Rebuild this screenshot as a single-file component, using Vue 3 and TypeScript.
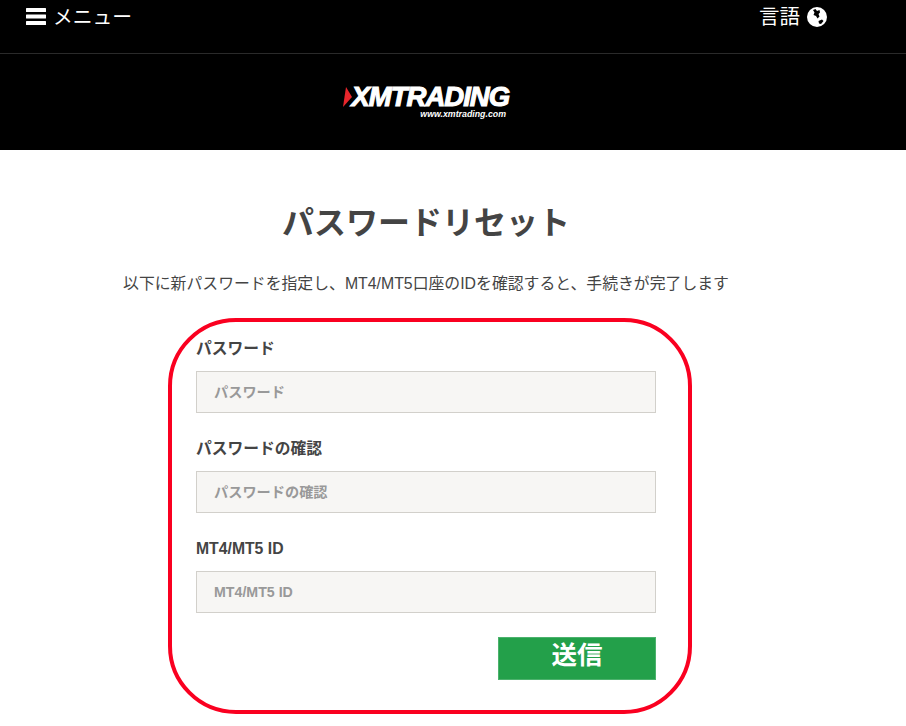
<script setup lang="ts">
const fields = [
  { label: 'パスワード', placeholder: 'パスワード' },
  { label: 'パスワードの確認', placeholder: 'パスワードの確認' },
  { label: 'MT4/MT5 ID', placeholder: 'MT4/MT5 ID' },
]
</script>

<template>
  <div class="page">
    <div class="topbar">
      <div class="menu">
        <svg class="burger" width="20" height="17" viewBox="0 0 20 17" fill="#fff">
          <rect y="0" width="20" height="4" rx="0.5" />
          <rect y="6.5" width="20" height="4" rx="0.5" />
          <rect y="13" width="20" height="4" rx="0.5" />
        </svg>
        <span>メニュー</span>
      </div>
      <div class="lang">
        <span>言語</span>
        <svg width="20" height="20" viewBox="0 0 20 20">
          <circle cx="10" cy="10" r="10" fill="#fff" />
          <path d="M6 3 8.500 2 10 4 12.500 3 13 5.500 11.500 7 12.500 9.500 10.500 11.500 9 9 6.500 8 7.500 5.500z" fill="#000" />
          <path d="M11.500 14 15 12.500 16.500 14 14 17 12 16.500z" fill="#000" />
        </svg>
      </div>
    </div>

    <div class="brand">
      <div class="logo">
        <svg class="mark" width="9" height="20" viewBox="0 0 9 20">
          <path d="M3 0 9 10 0 20z" fill="#e8262c" />
        </svg>
        <div class="logo-text">
          <div class="logo-name">XMTRADING</div>
          <div class="logo-url">www.xmtrading.com</div>
        </div>
      </div>
    </div>

    <main class="content">
      <h1>パスワードリセット</h1>
      <p class="lead">以下に新パスワードを指定し、MT4/MT5口座のIDを確認すると、手続きが完了します</p>

      <form class="form" @submit.prevent>
        <div v-for="f in fields" :key="f.label" class="field">
          <label>{{ f.label }}</label>
          <input type="text" :placeholder="f.placeholder" />
        </div>
        <div class="actions">
          <button type="submit">送信</button>
        </div>
      </form>
    </main>
  </div>
</template>

<style>
html, body {
  margin: 0;
  background: #fff;
}
</style>

<style scoped>
.page {
  width: 906px;
  height: 726px;
  overflow: hidden;
  font-family: "Liberation Sans", "Noto Sans CJK JP", sans-serif;
  color: #444;
}

.topbar {
  height: 53px;
  background: #000;
  border-bottom: 1px solid #2a2a2a;
  display: flex;
  justify-content: space-between;
  align-items: flex-start;
  padding: 0 79px 0 26px;
  color: #fff;
  font-size: 20.5px;
}

.menu {
  display: flex;
  align-items: center;
  gap: 7px;
  height: 32px;
  font-size: 19.8px;
}

.menu span {
  margin-top: -2px;
}

.lang {
  display: flex;
  align-items: center;
  gap: 7px;
  height: 33px;
}

.lang span {
  margin-top: -3px;
}

.brand {
  height: 96px;
  background: #000;
  padding-right: 54px;
  display: flex;
  justify-content: center;
  align-items: flex-start;
}

.logo {
  display: flex;
  align-items: flex-start;
  margin-top: 33px;
  width: 167px;
}

.mark {
  flex: none;
}

.logo-text {
  color: #fff;
  font-style: italic;
  font-weight: 700;
}

.logo-name {
  font-size: 27.5px;
  line-height: 20px;
  letter-spacing: -1px;
  -webkit-text-stroke: 1.1px #fff;
  white-space: nowrap;
}

.logo-url {
  font-size: 8.8px;
  line-height: 10px;
  text-align: right;
  padding-right: 3px;
  margin-top: 2px;
  white-space: nowrap;
}

.content {
  width: 852px;
  display: flex;
  flex-direction: column;
  align-items: center;
}

h1 {
  margin: 51px 0 0;
  font-size: 32px;
  line-height: 44px;
  font-weight: 700;
  color: #444;
}

.lead {
  margin: 28px 0 0;
  font-size: 15.85px;
  line-height: 22px;
  color: #444;
  white-space: nowrap;
}

.form {
  box-sizing: border-box;
  width: 524px;
  height: 396px;
  margin: 23px 0 0 8px;
  border: 4px solid #fa0020;
  border-radius: 68px;
  padding: 17px 32px 0 24px;
  display: flex;
  flex-direction: column;
}

.field {
  display: flex;
  flex-direction: column;
  height: 100px;
}

label {
  font-size: 15.75px;
  line-height: 20px;
  font-weight: 700;
  color: #444;
  margin-bottom: 12px;
}

input {
  box-sizing: border-box;
  width: 460px;
  height: 42px;
  flex: none;
  background: #f7f6f4;
  border: 1px solid #d2d0cb;
  border-radius: 0;
  outline: none;
  padding: 0 17px;
  font-family: inherit;
  font-size: 14.2px;
  font-weight: 700;
}

input::placeholder {
  color: #999;
  opacity: 1;
}

.actions {
  display: flex;
  justify-content: flex-end;
  margin-top: -2px;
  width: 460px;
}

button {
  width: 158px;
  height: 43px;
  background: #23a04a;
  border: 1px solid #4cb26d;
  color: #fff;
  font-family: inherit;
  font-size: 25.5px;
  font-weight: 700;
  line-height: 30px;
  padding: 0 0 8px;
}
</style>
